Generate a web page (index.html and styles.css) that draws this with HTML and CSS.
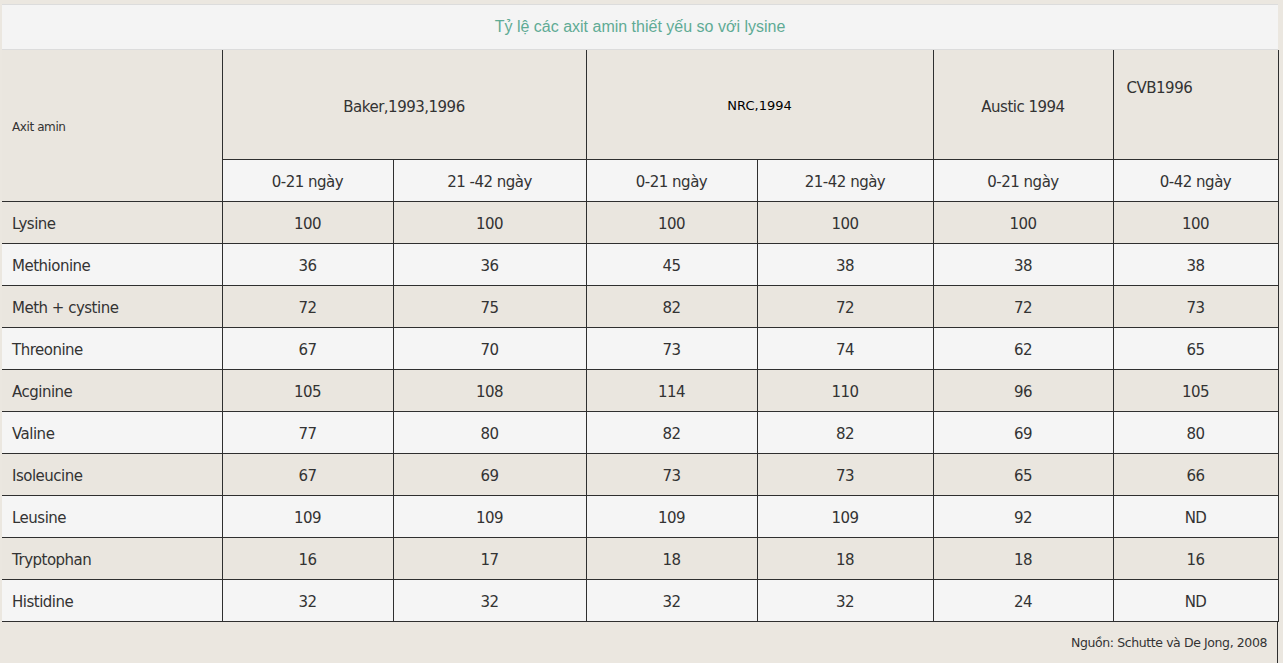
FILE: index.html
```html
<!DOCTYPE html>
<html lang="vi">
<head>
<meta charset="utf-8">
<title>Tỷ lệ các axit amin thiết yếu so với lysine</title>
<link rel="stylesheet" href="styles.css">
</head>
<body>
<div class="wrap">
  <div class="caption">Tỷ lệ các axit amin thiết yếu so với lysine</div>
  <table class="data">
    <colgroup>
      <col class="c1"><col class="c2"><col class="c3"><col class="c4"><col class="c5"><col class="c6"><col class="c7">
    </colgroup>
    <thead>
      <tr class="h1">
        <th rowspan="2" class="name small">Axit amin</th>
        <th colspan="2" class="lift">Baker,1993,1996</th>
        <th colspan="2" class="nrc">NRC,1994</th>
        <th class="lift">Austic 1994</th>
        <th class="cvb">CVB1996</th>
      </tr>
      <tr class="h2">
        <th>0-21 ngày</th>
        <th>21 -42 ngày</th>
        <th>0-21 ngày</th>
        <th>21-42 ngày</th>
        <th>0-21 ngày</th>
        <th>0-42 ngày</th>
      </tr>
    </thead>
    <tbody>
      <tr class="odd"><td class="name">Lysine</td><td>100</td><td>100</td><td>100</td><td>100</td><td>100</td><td>100</td></tr>
      <tr class="even"><td class="name">Methionine</td><td>36</td><td>36</td><td>45</td><td>38</td><td>38</td><td>38</td></tr>
      <tr class="odd"><td class="name">Meth + cystine</td><td>72</td><td>75</td><td>82</td><td>72</td><td>72</td><td>73</td></tr>
      <tr class="even"><td class="name">Threonine</td><td>67</td><td>70</td><td>73</td><td>74</td><td>62</td><td>65</td></tr>
      <tr class="odd"><td class="name">Acginine</td><td>105</td><td>108</td><td>114</td><td>110</td><td>96</td><td>105</td></tr>
      <tr class="even"><td class="name">Valine</td><td>77</td><td>80</td><td>82</td><td>82</td><td>69</td><td>80</td></tr>
      <tr class="odd"><td class="name">Isoleucine</td><td>67</td><td>69</td><td>73</td><td>73</td><td>65</td><td>66</td></tr>
      <tr class="even"><td class="name">Leusine</td><td>109</td><td>109</td><td>109</td><td>109</td><td>92</td><td>ND</td></tr>
      <tr class="odd"><td class="name">Tryptophan</td><td>16</td><td>17</td><td>18</td><td>18</td><td>18</td><td>16</td></tr>
      <tr class="even"><td class="name">Histidine</td><td>32</td><td>32</td><td>32</td><td>32</td><td>24</td><td>ND</td></tr>
    </tbody>
  </table>
  <div class="source">Nguồn: Schutte và De Jong, 2008</div>
</div>
</body>
</html>
```

FILE: styles.css
```css
html, body {
  margin: 0;
  padding: 0;
  background: #ebe7e0;
}
body {
  font-family: "DejaVu Sans", Verdana, sans-serif;
  color: #333;
}
.wrap {
  width: 1276px;
  margin: 4px 0 0 2px;
}
.caption {
  background: #f4f4f4;
  border-top: 1px solid #dcdcdc;
  border-bottom: 1px solid #dcdcdc;
  height: 44px;
  line-height: 44px;
  text-align: center;
  font-family: "Liberation Sans", Arial, sans-serif;
  font-size: 16px;
  color: #5fab95;
}
.data {
  width: 1276px;
  border-collapse: collapse;
  table-layout: fixed;
  font-size: 15px;
  letter-spacing: -0.5px;
}
.c1 { width: 220px; }
.c2 { width: 171px; }
.c3 { width: 193px; }
.c4 { width: 171px; }
.c5 { width: 176px; }
.c6 { width: 180px; }
.c7 { width: 165px; }
.data th, .data td {
  border: 1px solid #2f2f2f;
  padding: 2px 0 0;
  text-align: center;
  font-weight: normal;
  height: 39px;
}
.data .name {
  border-left: none;
  text-align: left;
  padding-left: 10px;
}
.data .h1 th {
  border-top: none;
  height: 107px;
  background: #eae6df;
}
.data .h1 .lift {
  padding-top: 4px;
  height: 105px;
}
.data .h2 th {
  background: #f5f5f5;
}
.data .small {
  font-size: 12px;
  letter-spacing: -0.4px;
}
.data .nrc {
  font-size: 13px;
  letter-spacing: 0;
  color: #000;
}
.data .h1 .cvb {
  text-align: left;
  vertical-align: top;
  height: 80px;
  padding: 29px 0 0 13px;
}
.odd td { background: #eae6df; }
.even td { background: #f5f5f5; }
.source {
  border-right: 1px solid #2f2f2f;
  height: 42px;
  box-sizing: border-box;
  padding: 13px 10px 0 0;
  text-align: right;
  font-size: 12.5px;
  letter-spacing: -0.4px;
  color: #333;
}
```
